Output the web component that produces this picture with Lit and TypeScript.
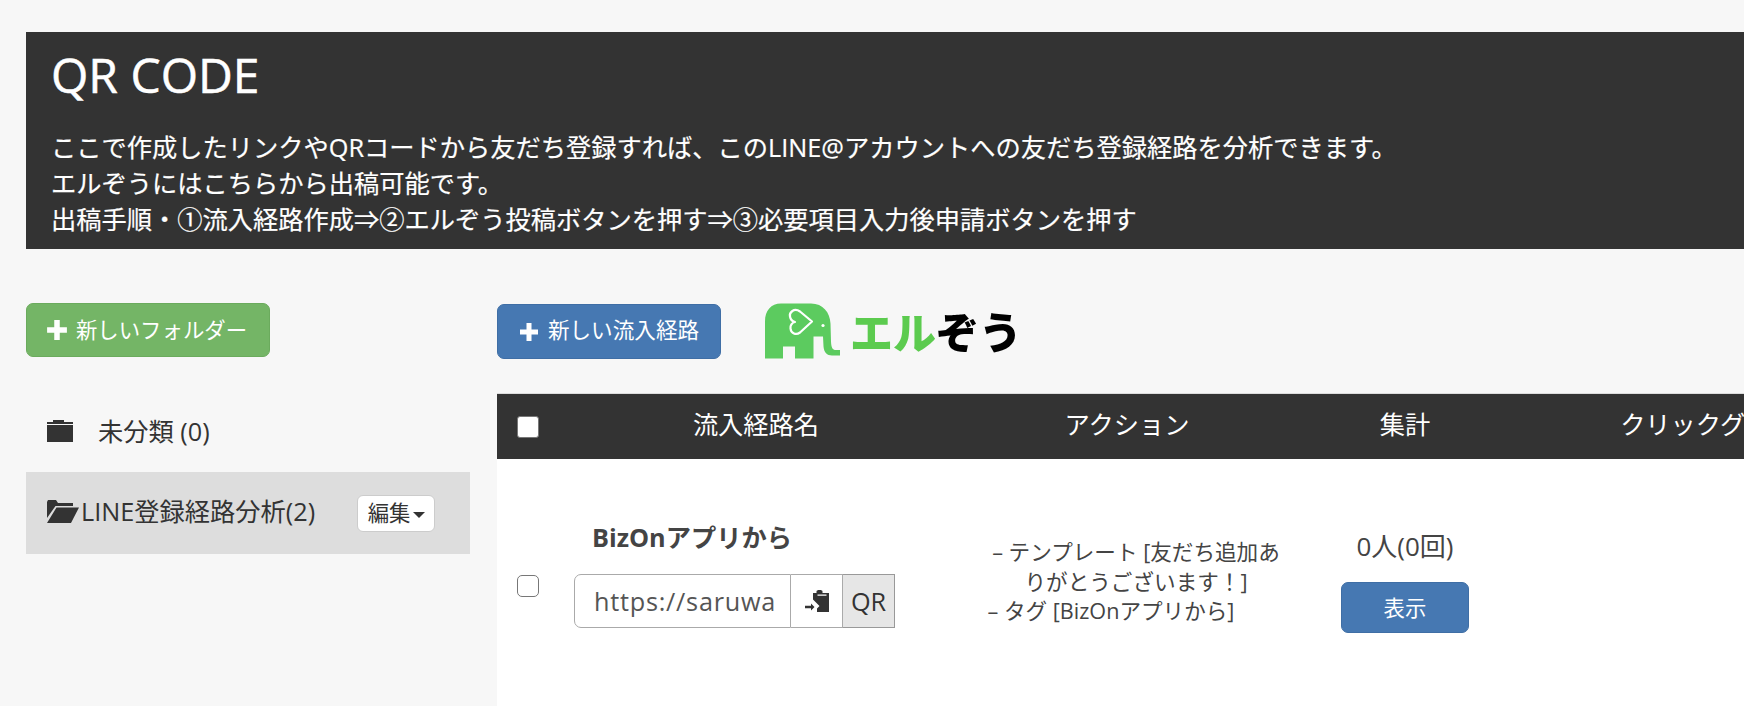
import { LitElement, html, css, svg } from "lit";
import { customElement } from "lit/decorators.js";

const plus = (s: number) => html`<svg class="plus" width=${s} height=${s} viewBox="0 0 20 20"><path fill="#fff" d="M7.5 1h5v6.5H19v5h-6.5V19h-5v-6.5H1v-5h6.5z"/></svg>`;

const folderClosed = svg`<path fill="#333" d="M6 0h11v2h9v2H0V2h6zM0 5h26v17H0z"/>`;
const folderOpen = svg`<path fill="#333" d="M1 0h8l2 3h15v3H8.5L0 18V2z M9.500 7.500H32L24 23H0z"/>`;

const elephant = svg`
  <path fill="#5ccb5f" d="M0 55V18C0 7 6 0 16 0h30c12 0 19 9 19.500 20l.5 18c.2 6 1.500 8.500 5 8.500h4V52H67c-5 0-8-3-8.500-9L58 33H48.500v22H30V43H18v12z"/>
  <path fill="none" stroke="#fff" stroke-width="2.2" stroke-linejoin="round" d="M47 18L35 8C29 4 24 9 25 13C25.500 16 28 18 30 18.500C27 19 25 22 25.500 25C26 30 31 32 35 29Z"/>
  <circle cx="58" cy="22" r="1.600" fill="#fff"/>`;

const clip = svg`
  <path fill="#333" d="M8 3h3.500V1.500C11.500.5 12.500 0 14.500 0s3 .5 3 1.500V3H24v19H12v-3.500l2.500-2.500L11 12.500 8 9.500zM12.500 5.800h9V4.400h-9z"/>
  <path fill="#333" d="M0 15.800h6V13.500l3.500 3.500-3.500 3.500v-2.300H0z"/>`;

@customElement("app-root")
export class AppRoot extends LitElement {
  static styles = css`
    :host {
      display: block;
      width: 1744px;
      height: 706px;
      overflow: hidden;
      background: #f7f7f7;
      font-family: "Open Sans", "Noto Sans CJK JP", sans-serif;
      font-size: 25.25px;
      line-height: 36px;
      color: #333;
    }
    .page { padding: 32px 0 0 26px; }
    .banner {
      background: #333;
      color: #fff;
      padding: 16px 25px 13px;
      height: 188px;
    }
    h1 {
      margin: 0 0 28px;
      font-size: 48px;
      font-weight: 400;
      line-height: 53px;
      -webkit-text-stroke: 0.5px #fff;
    }
    .banner p { margin: 0; white-space: nowrap; -webkit-text-stroke: 0.2px #fff; }
    .content { display: flex; gap: 27px; margin-top: 54px; }
    .side { width: 444px; flex: none; }
    .btn {
      display: inline-flex;
      align-items: center;
      justify-content: center;
      box-sizing: border-box;
      color: #fff;
      font-size: 21.4px;
      border-radius: 7px;
    }
    .btn span { padding-bottom: 1px; }
    .green {
      width: 244px;
      height: 54px;
      background: #74b566;
      border: 1px solid #6bab5d;
      gap: 8px;
      padding-right: 3px;
    }
    .blue {
      background: #4678b2;
      border: 1px solid #3f6ea5;
    }
    .new-route { width: 224px; height: 55px; gap: 9px; font-size: 21.6px; }
    .new-route span { padding-bottom: 4px; }
    .plus { flex: none; }
    .folders { margin-top: 33px; }
    .folder {
      display: flex;
      align-items: center;
      height: 82px;
      padding-left: 21px;
      white-space: nowrap;
    }
    .folder.first { gap: 25px; }
    .folder.active { background: #ddd; gap: 2px; }
    .lift { margin-bottom: 4px; }
    .edit {
      margin-left: 40px;
      display: flex;
      align-items: center;
      justify-content: center;
      gap: 2px;
      width: 78px;
      height: 37px;
      box-sizing: border-box;
      background: #fff;
      border: 1px solid #ccc;
      border-radius: 6px;
      font-size: 21.4px;
    }
    .caret {
      width: 0;
      height: 0;
      border-left: 6px solid transparent;
      border-right: 6px solid transparent;
      border-top: 6px solid #333;
      margin-top: 3px;
    }
    .main { flex: 1; min-width: 0; overflow: hidden; }
    .toolbar { display: flex; align-items: flex-start; padding-top: 1px; height: 56px; gap: 44px; }
    .logo { display: flex; align-items: flex-start; filter: blur(0.5px); }
    .logo svg { margin-top: -1px; }
    .logo-text {
      margin-left: 10px;
      margin-top: -5px;
      font-size: 43px;
      line-height: 62px;
      font-weight: 900;
      font-family: "Noto Sans CJK JP", sans-serif;
      white-space: nowrap;
    }
    .logo-text .g { color: #5ccb4f; }
    .logo-text .k { color: #000; }
    .table { margin-top: 33px; width: 1247px; overflow: hidden; }
    .grid { display: grid; grid-template-columns: 59px 400px 342px 214px 392px; width: 1407px; }
    .head {
      background: #333;
      color: #fff;
      height: 66px;
      align-items: center;
      border-top: 1px solid #ddd;
      box-sizing: border-box;
      text-align: center;
      white-space: nowrap;
    }
    .head .col { padding-bottom: 6px; }
    .cb-h {
      width: 22px;
      height: 22px;
      box-sizing: border-box;
      background: #fff;
      border: 1px solid #777;
      border-radius: 3px;
      margin-left: 20px;
    }
    .row { background: #fff; height: 247px; color: #444; }
    .cb {
      width: 22px;
      height: 22px;
      box-sizing: border-box;
      background: #fff;
      border: 1.5px solid #777;
      border-radius: 5px;
      margin: 116px 0 0 20px;
    }
    .name { padding: 60px 0 0 18px; }
    .title { font-weight: 700; padding-left: 18px; margin-bottom: 19px; white-space: nowrap; }
    .group { display: flex; height: 54px; width: 321px; box-sizing: border-box; }
    .url {
      box-sizing: border-box;
      width: 217px;
      border: 1px solid #aaa;
      border-radius: 7px 0 0 7px;
      padding: 8px 10px 0 19px;
      white-space: nowrap;
      letter-spacing: 0.75px;
      color: #555;
    }
    .copy {
      box-sizing: border-box;
      width: 52px;
      display: flex;
      align-items: center;
      justify-content: center;
      border: 1px solid #aaa;
      border-left: 0;
      background: #fff;
    }
    .qr {
      box-sizing: border-box;
      width: 52px;
      display: flex;
      align-items: center;
      justify-content: center;
      border: 1px solid #999;
      border-left: 0;
      background: #e6e6e6;
      color: #333;
    }
    .action {
      padding: 78px 8px 0 26px;
      font-size: 21.6px;
      line-height: 29.6px;
      text-align: center;
      color: #444;
    }
    .action .tag { padding-right: 50px; white-space: nowrap; }
    .count { padding-top: 69px; text-align: center; font-size: 26px; }
    .count .num { margin-bottom: 18px; }
    .show { width: 128px; height: 51px; }
  `;

  render() {
    return html`
      <div class="page">
        <header class="banner">
          <h1>QR CODE</h1>
          <p>ここで作成したリンクやQRコードから友だち登録すれば、このLINE@アカウントへの友だち登録経路を分析できます。</p>
          <p>エルぞうにはこちらから出稿可能です。</p>
          <p>出稿手順・①流入経路作成⇒②エルぞう投稿ボタンを押す⇒③必要項目入力後申請ボタンを押す</p>
        </header>
        <div class="content">
          <aside class="side">
            <div class="btn green">${plus(22)}<span>新しいフォルダー</span></div>
            <div class="folders">
              <div class="folder first">
                <svg width="26" height="22" viewBox="0 0 26 22">${folderClosed}</svg>
                <span>未分類 (0)</span>
              </div>
              <div class="folder active">
                <svg class="lift" width="32" height="23" viewBox="0 0 32 23">${folderOpen}</svg>
                <span class="lift">LINE登録経路分析(2)</span>
                <div class="edit">編集<span class="caret"></span></div>
              </div>
            </div>
          </aside>
          <main class="main">
            <div class="toolbar">
              <div class="btn blue new-route">${plus(20)}<span>新しい流入経路</span></div>
              <div class="logo">
                <svg width="75" height="56" viewBox="0 0 75 55">${elephant}</svg>
                <span class="logo-text"><span class="g">エル</span><span class="k">ぞう</span></span>
              </div>
            </div>
            <div class="table">
              <div class="grid head">
                <div class="cb-h"></div>
                <div class="col">流入経路名</div>
                <div class="col">アクション</div>
                <div class="col">集計</div>
                <div class="col">クリックグラフ</div>
              </div>
              <div class="grid row">
                <div><div class="cb"></div></div>
                <div class="name">
                  <div class="title">BizOnアプリから</div>
                  <div class="group">
                    <div class="url">https://saruwa</div>
                    <div class="copy"><svg width="24" height="22" viewBox="0 0 24 22">${clip}</svg></div>
                    <div class="qr">QR</div>
                  </div>
                </div>
                <div class="action">
                  <div>– テンプレート [友だち追加ありがとうございます！]</div>
                  <div class="tag">– タグ [BizOnアプリから]</div>
                </div>
                <div class="count">
                  <div class="num">0人(0回)</div>
                  <div class="btn blue show">表示</div>
                </div>
                <div></div>
              </div>
            </div>
          </main>
        </div>
      </div>
    `;
  }
}
